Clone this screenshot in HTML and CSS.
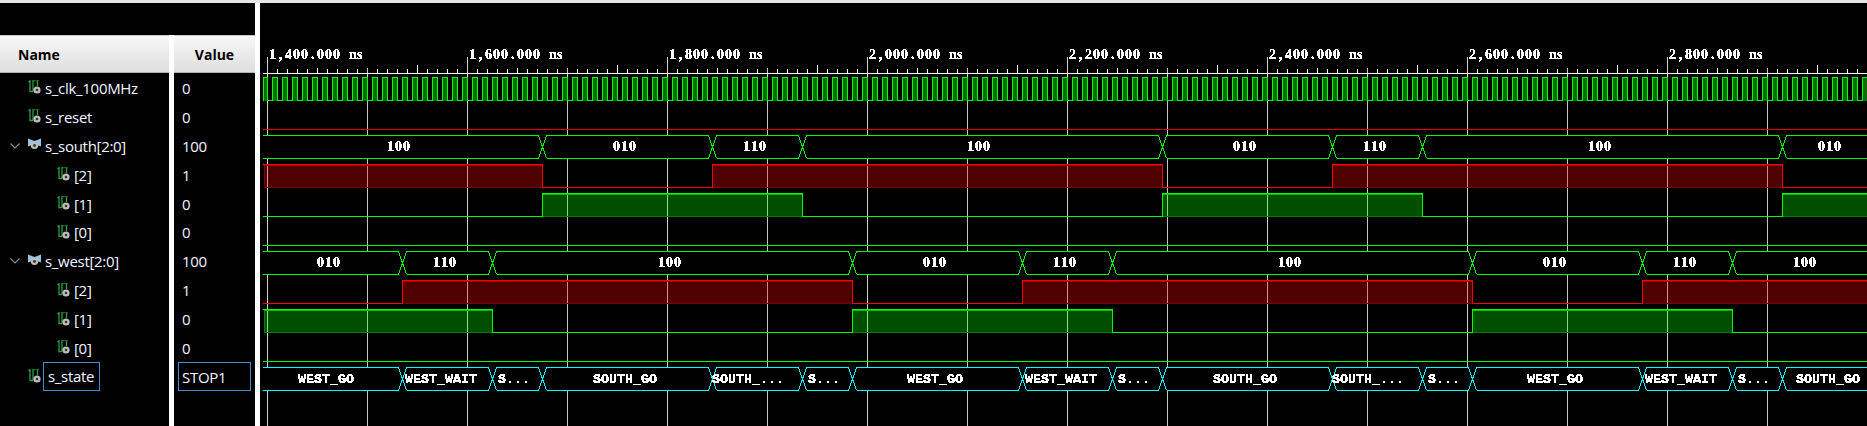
FILE: index.html
```html
<!DOCTYPE html>
<html lang="en">

<head>
  <meta charset="UTF-8">
  <title>Waveform</title>
  <link rel="stylesheet" href="styles.css">
</head>

<body>
  <svg class="defs" width="0" height="0">
    <defs>
      <g id="bit-icon">
        <path d="M0.5 2L2 0.7V11.5H5M5 11.5V0.7H6.5M10.5 0.7H9.5V6" fill="none" stroke="#2f9e44" stroke-width="1.3" />
        <path d="M5 0.7H10.5" fill="none" stroke="#1d6b2e" stroke-width="1" />
        <circle cx="9" cy="10" r="3.6" fill="#bdbdbd" />
        <circle cx="9" cy="10" r="1.3" fill="#333333" />
      </g>
      <g id="bus-icon">
        <path d="M0 0.5L6.5 3L13 0.5V8.5L9 7H4L0 8.5Z" fill="#9cc3de" />
        <circle cx="6.5" cy="7.5" r="3.6" fill="#bdbdbd" />
        <circle cx="6.5" cy="7.5" r="1.4" fill="#333333" />
      </g>
      <path id="chevron" d="M0.5 0.5L5 5L9.5 0.5" fill="none" stroke="#8a8a8a" stroke-width="1.2" />
    </defs>
  </svg>

  <div class="top-strip"></div>

  <div class="panes">
    <div class="left-block">
      <div class="left-spacer"></div>
      <div class="columns">
        <div class="col col-name">
          <div class="col-head head-name">Name</div>
          <div class="row depth-0"><svg class="icon" viewBox="0 0 13 14"><use href="#bit-icon" /></svg><span class="label">s_clk_100MHz</span></div>
          <div class="row depth-0"><svg class="icon" viewBox="0 0 13 14"><use href="#bit-icon" /></svg><span class="label">s_reset</span></div>
          <div class="row depth-0"><svg class="chevron" viewBox="0 0 10 6"><use href="#chevron" /></svg><svg class="icon" viewBox="0 0 13 14"><use href="#bus-icon" /></svg><span class="label">s_south[2:0]</span></div>
          <div class="row depth-1"><svg class="icon" viewBox="0 0 13 14"><use href="#bit-icon" /></svg><span class="label">[2]</span></div>
          <div class="row depth-1"><svg class="icon" viewBox="0 0 13 14"><use href="#bit-icon" /></svg><span class="label">[1]</span></div>
          <div class="row depth-1"><svg class="icon" viewBox="0 0 13 14"><use href="#bit-icon" /></svg><span class="label">[0]</span></div>
          <div class="row depth-0"><svg class="chevron" viewBox="0 0 10 6"><use href="#chevron" /></svg><svg class="icon" viewBox="0 0 13 14"><use href="#bus-icon" /></svg><span class="label">s_west[2:0]</span></div>
          <div class="row depth-1"><svg class="icon" viewBox="0 0 13 14"><use href="#bit-icon" /></svg><span class="label">[2]</span></div>
          <div class="row depth-1"><svg class="icon" viewBox="0 0 13 14"><use href="#bit-icon" /></svg><span class="label">[1]</span></div>
          <div class="row depth-1"><svg class="icon" viewBox="0 0 13 14"><use href="#bit-icon" /></svg><span class="label">[0]</span></div>
          <div class="row depth-0"><svg class="icon" viewBox="0 0 13 14"><use href="#bit-icon" /></svg><span class="label selected">s_state</span></div>
        </div>
        <div class="col col-value">
          <div class="col-head head-value">Value</div>
          <div class="row value">0</div>
          <div class="row value">0</div>
          <div class="row value">100</div>
          <div class="row value">1</div>
          <div class="row value">0</div>
          <div class="row value">0</div>
          <div class="row value">100</div>
          <div class="row value">1</div>
          <div class="row value">0</div>
          <div class="row value">0</div>
          <div class="row value"><span class="selected value-selected">STOP1</span></div>
        </div>
      </div>
    </div>

    <div class="wave-pane">
      <svg id="wave" class="wave" viewBox="260 3 1607 423" width="1607" height="423">
        <defs>
          <filter id="bitmap" x="-5%" y="-20%" width="110%" height="140%" color-interpolation-filters="sRGB">
            <feComponentTransfer>
              <feFuncA type="discrete" tableValues="0 1 1 1" />
            </feComponentTransfer>
          </filter>
        </defs>
      </svg>
    </div>
  </div>

  <script src="wave.js"></script>
</body>

</html>
```

FILE: styles.css
```css
* {
  box-sizing: border-box;
}

html,
body {
  margin: 0;
  height: 100%;
  overflow: hidden;
}

body {
  background: #ffffff;
  font-family: 'Open Sans', 'Noto Sans', sans-serif;
  display: flex;
  flex-direction: column;
}

.defs {
  position: absolute;
}

.top-strip {
  height: 3px;
  background: #e6e6e6;
}

.panes {
  flex: 1;
  display: flex;
  gap: 5px;
  min-height: 0;
}

.left-block {
  width: 255px;
  display: flex;
  flex-direction: column;
}

.left-spacer {
  height: 32px;
  background: #000000;
}

.columns {
  flex: 1;
  display: flex;
  gap: 5px;
}

.col {
  background: #000000;
}

.col-name {
  width: 169px;
}

.col-value {
  width: 81px;
}

.col-head {
  height: 38px;
  display: flex;
  align-items: center;
  background: linear-gradient(#f7f7f7, #dedede);
  border-top: 1px solid #c8c8c8;
  border-bottom: 1px solid #b0b0b0;
  color: #000000;
  font-size: 14px;
  font-weight: 700;
}

.head-name {
  padding-left: 18px;
}

.head-value {
  justify-content: center;
}

.row {
  height: 28.9px;
  display: flex;
  align-items: center;
  color: #f2f6ff;
  font-size: 15px;
  letter-spacing: -0.3px;
  white-space: nowrap;
  position: relative;
}

.label {
  padding-top: 1px;
}

.depth-0 {
  padding-left: 28px;
}

.depth-1 {
  padding-left: 57px;
}

.value {
  padding-left: 8px;
  padding-top: 1px;
}

.icon {
  width: 13px;
  height: 14px;
  margin-right: 4px;
  flex: none;
}

.chevron {
  position: absolute;
  left: 10px;
  top: 12px;
  width: 10px;
  height: 6px;
}

.selected {
  border: 1px solid #3f8fd0;
  height: 29px;
  display: flex;
  align-items: center;
  padding: 0 4px;
  width: 57px;
  margin-left: -2px;
}

.value-selected {
  width: 73px;
  margin-left: -4px;
  padding: 0 3px;
}

.wave-pane {
  flex: 1;
  background: #000000;
  min-width: 0;
}

.wave {
  display: block;
  shape-rendering: crispEdges;
}

.wave text {
  fill: #ffffff;
  font-family: 'Liberation Serif', serif;
  font-size: 14px;
  font-weight: 700;
  filter: url(#bitmap);
}

.wave text.state {
  font-family: 'Liberation Mono', monospace;
  font-size: 13.33px;
}
```

FILE: wave.js
```js
const svg = document.getElementById('wave');
const NS = 'http://www.w3.org/2000/svg';
const LEFT = 263;
const RIGHT = 1867;
const GREEN = '#00ff00';
const RED = '#ff0000';
const CYAN = '#00ffff';
const CHAR_WIDTH = 8;

function add(tag, attrs, text) {
  const el = document.createElementNS(NS, tag);
  for (const key in attrs) el.setAttribute(key, attrs[key]);
  if (text) el.textContent = text;
  svg.appendChild(el);
  return el;
}

function line(x1, y1, x2, y2, color) {
  add('line', { x1, y1, x2, y2, stroke: color, 'stroke-width': 1 });
}

// Every character gets its own x, so the serif face keeps the fixed pitch of the original.
// Comma and dot are narrow, they sit in the middle of their cell.
function label(x, y, str, cls) {
  const xs = Array.from(str, (c, i) => {
    const nudge = !cls && (c === ',' || c === '.') ? 2 : 0;
    return x + i * CHAR_WIDTH + nudge;
  }).join(' ');
  const attrs = { x: xs, y };
  if (cls) attrs.class = cls;
  add('text', attrs, str);
}

// Grid and time ruler, 1 ns is 1 px and 1,400 ns sits at x=267
for (let x = 267; x < RIGHT; x += 10) {
  const px = x + 0.5;
  const step = x - 267;
  if (step % 100 === 0) {
    const major = step % 200 === 0;
    line(px, major ? 57 : 68, px, 426, major ? '#d0d0d0' : '#c4c4c4');
    if (major) {
      const ns = 1400 + step;
      label(x + 2, 59, ns.toLocaleString('en-US') + '.000 ns');
    }
  } else if (step % 50 === 0) {
    line(px, (step - 50) % 200 === 0 ? 68 : 65, px, 73, '#ffffff');
  } else {
    line(px, 69, px, 73, '#ffffff');
  }
}
line(LEFT, 73.5, RIGHT, 73.5, '#ffffff');

// One row every 29 px, top is the high level and top + 23 the low level
function rowTop(i) {
  return 77 + i * 29;
}

function bit(row, color, dim, inner, fill, edges, startHigh) {
  const top = rowTop(row) + 0.5;
  const low = top + 23;
  const points = [LEFT].concat(edges, [RIGHT]);
  let high = startHigh;
  let d = `M${LEFT} ${high ? top : low}`;
  for (let i = 0; i < points.length - 1; i++) {
    const a = points[i];
    const b = points[i + 1];
    if (high) {
      const x0 = a === LEFT ? LEFT + 1.5 : a + 0.5;
      add('rect', { x: x0, y: top, width: b - x0 + 0.5, height: 23, fill, stroke: dim });
      line(x0, top + 1, b + 0.5, top + 1, inner);
    }
    d += `H${b === RIGHT ? b : b + 0.5}`;
    high = !high;
    if (b !== RIGHT) d += `V${high ? top : low}`;
  }
  add('path', { d, fill: 'none', stroke: color });
}

function bus(row, color, segments, cls) {
  const top = rowTop(row) + 0.5;
  const low = top + 23;
  const mid = top + 11.5;
  segments.forEach(([a, b, str, cx]) => {
    const x0 = a === LEFT ? a : a + 4.5;
    const x1 = b === RIGHT ? b : b - 3.5;
    add('rect', { x: x0, y: top, width: x1 - x0, height: 23, fill: '#000000' });
    line(x0, top, x1, top, color);
    line(x0, low, x1, low, color);
    if (b !== RIGHT) {
      const xa = x1;
      const xb = b + 4.5;
      add('path', { d: `M${xa} ${top}L${xb} ${low}M${xa} ${low}L${xb} ${top}`, stroke: color, fill: 'none' });
    }
    label(cx - str.length * CHAR_WIDTH / 2, mid + 4, str, cls);
  });
}

// s_clk_100MHz, high between 272+10k and 277+10k
const clockTop = rowTop(0) + 0.5;
const clockLow = clockTop + 23;
let clock = `M${LEFT + 0.5} ${clockLow}V${clockTop}H267.5V${clockLow}`;
add('rect', { x: LEFT + 0.5, y: clockTop, width: 4, height: 23, fill: '#0a6e0a' });
for (let x = 272; x < RIGHT; x += 10) {
  const end = Math.min(x + 5, RIGHT);
  add('rect', { x: x + 0.5, y: clockTop, width: end - x, height: 23, fill: '#0a6e0a' });
  clock += `H${x + 0.5}V${clockTop}H${end + 0.5}V${clockLow}`;
}
add('path', { d: clock, fill: 'none', stroke: GREEN });

// s_reset
line(LEFT, rowTop(1) + 23.5, RIGHT, rowTop(1) + 23.5, '#e80000');

const redFill = 'rgba(255, 0, 0, 0.31)';
const greenFill = 'rgba(0, 255, 0, 0.31)';
const redBit = (row, edges, start) => bit(row, RED, '#7a0000', '#a80000', redFill, edges, start);
const greenBit = (row, edges, start) => bit(row, GREEN, '#008000', '#00c000', greenFill, edges, start);

bus(2, GREEN, [
  [LEFT, 542, '100', 399],
  [542, 712, '010', 625],
  [712, 802, '110', 755],
  [802, 1162, '100', 979],
  [1162, 1332, '010', 1245],
  [1332, 1422, '110', 1375],
  [1422, 1782, '100', 1600],
  [1782, RIGHT, '010', 1830]
]);
redBit(3, [542, 712, 1162, 1332, 1782], true);
greenBit(4, [542, 802, 1162, 1422, 1782], false);
greenBit(5, [], false);

bus(6, GREEN, [
  [LEFT, 402, '010', 329],
  [402, 492, '110', 445],
  [492, 852, '100', 670],
  [852, 1022, '010', 935],
  [1022, 1112, '110', 1065],
  [1112, 1472, '100', 1290],
  [1472, 1642, '010', 1555],
  [1642, 1732, '110', 1685],
  [1732, RIGHT, '100', 1805]
]);
redBit(7, [402, 852, 1022, 1472, 1642], false);
greenBit(8, [492, 852, 1112, 1472, 1732], true);
greenBit(9, [], false);

bus(10, CYAN, [
  [LEFT, 402, 'WEST_GO', 326],
  [402, 492, 'WEST_WAIT', 441],
  [492, 542, 'S...', 514],
  [542, 712, 'SOUTH_GO', 625],
  [712, 802, 'SOUTH_...', 748],
  [802, 852, 'S...', 824],
  [852, 1022, 'WEST_GO', 935],
  [1022, 1112, 'WEST_WAIT', 1061],
  [1112, 1162, 'S...', 1134],
  [1162, 1332, 'SOUTH_GO', 1245],
  [1332, 1422, 'SOUTH_...', 1368],
  [1422, 1472, 'S...', 1444],
  [1472, 1642, 'WEST_GO', 1555],
  [1642, 1732, 'WEST_WAIT', 1681],
  [1732, 1782, 'S...', 1754],
  [1782, RIGHT, 'SOUTH_GO', 1828]
], 'state');
```
